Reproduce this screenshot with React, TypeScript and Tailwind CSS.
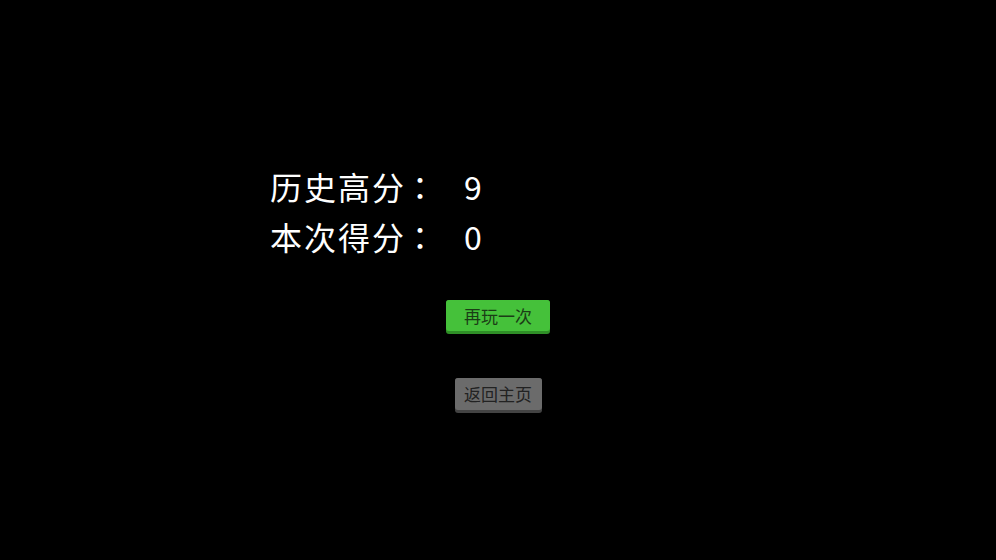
import React from "react";

export default function App() {
  return (
    <div
      className="w-[996px] h-[560px] bg-black relative overflow-hidden"
      style={{ fontFamily: '"Noto Sans CJK SC", "Noto Sans", sans-serif' }}
    >
      <div className="pt-[161px] pl-[270px] text-white text-[32px] leading-[50px]">
        <div className="flex">
          <span className="tracking-[2px]">历史高分</span>
          <span className="-ml-[2px] tracking-[2px]" style={{ fontFamily: '"Noto Sans CJK TC", sans-serif' }}>：</span>
          <span className="ml-[26px]">9</span>
        </div>
        <div className="flex">
          <span className="tracking-[2px]">本次得分</span>
          <span className="-ml-[2px] tracking-[2px]" style={{ fontFamily: '"Noto Sans CJK TC", sans-serif' }}>：</span>
          <span className="ml-[26px]">0</span>
        </div>
      </div>
      <div className="flex flex-col items-center mt-[39px]">
        <div className="w-[104px] h-[34px] rounded-[3px] bg-[#2f8f27] pb-[3px]">
          <div className="h-full rounded-[3px] bg-[#45c13a] flex items-center justify-center text-[17px] text-[#1b3d16]">
            再玩一次
          </div>
        </div>
        <div className="mt-[44px] w-[87px] h-[35px] rounded-[3px] bg-[#434343] pb-[3px]">
          <div className="h-full rounded-[3px] bg-[#6b6b6b] flex items-center justify-center text-[17px] text-[#222222]">
            返回主页
          </div>
        </div>
      </div>
    </div>
  );
}
